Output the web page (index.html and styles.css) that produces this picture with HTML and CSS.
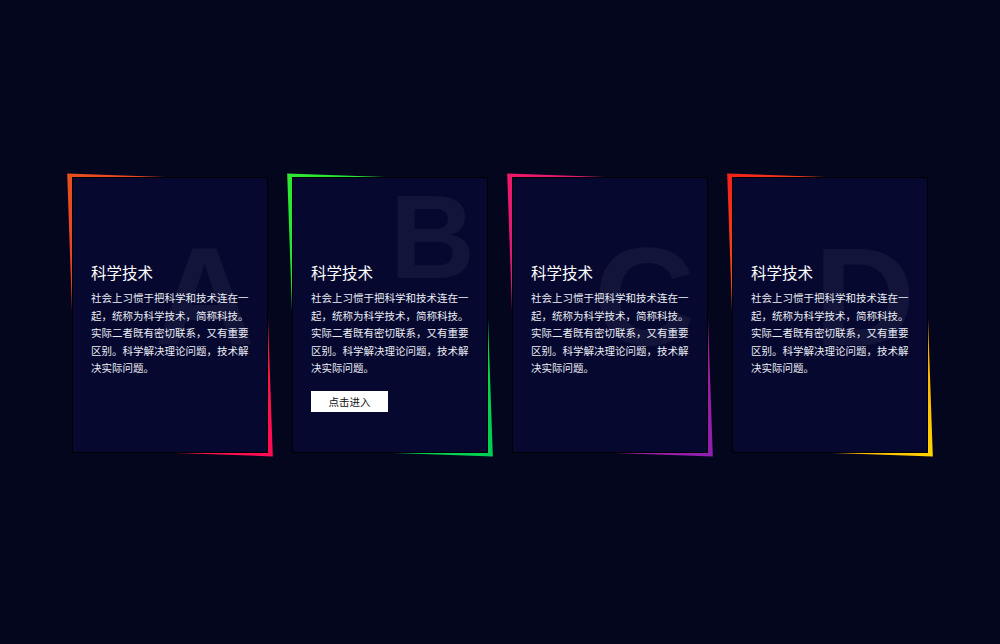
FILE: index.html
```html
<!DOCTYPE html>
<html lang="zh-CN">
<head>
<meta charset="utf-8">
<title>科学技术</title>
<link rel="stylesheet" href="styles.css">
</head>
<body>
<main class="cards">
  <div class="card card-a">
    <div class="card-inner">
      <span class="letter">A</span>
      <h2 class="title">科学技术</h2>
      <p class="desc">社会上习惯于把科学和技术连在一起，统称为科学技术，简称科技。实际二者既有密切联系，又有重要区别。科学解决理论问题，技术解决实际问题。</p>
      <a class="btn">点击进入</a>
    </div>
  </div>
  <div class="card card-b active">
    <div class="card-inner">
      <span class="letter">B</span>
      <h2 class="title">科学技术</h2>
      <p class="desc">社会上习惯于把科学和技术连在一起，统称为科学技术，简称科技。实际二者既有密切联系，又有重要区别。科学解决理论问题，技术解决实际问题。</p>
      <a class="btn">点击进入</a>
    </div>
  </div>
  <div class="card card-c">
    <div class="card-inner">
      <span class="letter">C</span>
      <h2 class="title">科学技术</h2>
      <p class="desc">社会上习惯于把科学和技术连在一起，统称为科学技术，简称科技。实际二者既有密切联系，又有重要区别。科学解决理论问题，技术解决实际问题。</p>
      <a class="btn">点击进入</a>
    </div>
  </div>
  <div class="card card-d">
    <div class="card-inner">
      <span class="letter">D</span>
      <h2 class="title">科学技术</h2>
      <p class="desc">社会上习惯于把科学和技术连在一起，统称为科学技术，简称科技。实际二者既有密切联系，又有重要区别。科学解决理论问题，技术解决实际问题。</p>
      <a class="btn">点击进入</a>
    </div>
  </div>
</main>
</body>
</html>
```
FILE: styles.css
```css
html, body {
  margin: 0;
  padding: 0;
}
body {
  background: #04061e;
  width: 1000px;
  height: 644px;
  overflow: hidden;
  font-family: "Noto Sans CJK SC", "Noto Sans", sans-serif;
}
.cards {
  display: flex;
  justify-content: center;
  gap: 24px;
  padding-top: 177px;
}
.card {
  position: relative;
  width: 196px;
  height: 276px;
  flex: none;
}
.card::before {
  content: "";
  position: absolute;
  inset: 0;
  transform: skew(2deg, 2deg);
}
.card-a::before { background: linear-gradient(315deg, #ff0a55, #e8501c); }
.card-b::before { background: linear-gradient(315deg, #00cf55, #2ee832); }
.card-c::before { background: linear-gradient(315deg, #8e1fb0, #f0186a); }
.card-d::before { background: linear-gradient(315deg, #ffd500, #f4201c); }

.card-inner {
  position: relative;
  box-sizing: border-box;
  height: 100%;
  background: #06082f;
  border: 1px solid #000;
  padding: 84px 16px 0 18px;
  overflow: hidden;
}
.letter {
  position: absolute;
  top: 49px;
  right: 12px;
  font-family: "Liberation Sans", Arial, sans-serif;
  font-weight: bold;
  font-size: 140px;
  line-height: 1;
  color: rgba(255, 255, 255, 0.05);
}
.active .letter {
  top: 0;
  font-size: 118px;
}
.title {
  position: relative;
  margin: 0;
  font-size: 15.5px;
  line-height: 20px;
  font-weight: normal;
  color: #ffffff;
}
.desc {
  position: relative;
  margin: 7px 0 0;
  font-size: 10.5px;
  line-height: 17.6px;
  color: #eceef6;
}
.btn {
  position: relative;
  display: flex;
  align-items: center;
  justify-content: center;
  width: 77px;
  height: 21px;
  margin-top: 14px;
  background: #ffffff;
  color: #111;
  font-size: 10.5px;
  visibility: hidden;
}
.active .btn {
  visibility: visible;
}
```
